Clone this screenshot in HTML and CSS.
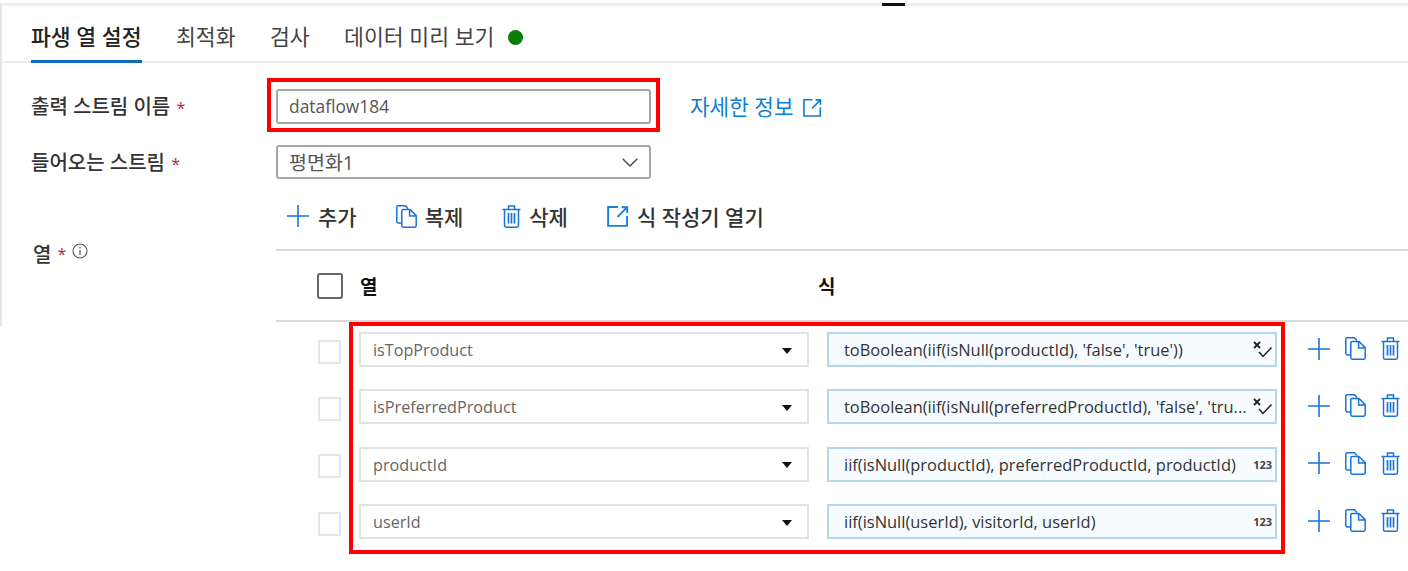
FILE: index.html
```html
<!DOCTYPE html>
<html lang="ko">
<head>
<meta charset="utf-8">
<title>파생 열 설정</title>
<link rel="stylesheet" href="styles.css">
</head>
<body>
<svg class="defs" width="0" height="0" aria-hidden="true">
  <symbol id="plus" viewBox="0 0 22 22"><path d="M11 0v22M0 11h22" fill="none" stroke="currentColor" stroke-width="1.6"/></symbol>
  <symbol id="copy" viewBox="0 0 21 23"><path d="M5.5 18H2.2Q.8 18 .8 16.6V2.2Q.8.8 2.2.8H9.5L12 3.5M5.8 5.8Q5.8 4.4 7.2 4.4H14L20.2 10.6V20.8Q20.2 22.2 18.8 22.2H7.2Q5.8 22.2 5.8 20.8ZM13.6 4.6V11H20" fill="none" stroke="currentColor" stroke-width="1.5"/></symbol>
  <symbol id="trash" viewBox="0 0 19 23"><path d="M.5 4.5H18.5M6.5 4.5V1H12.5V4.5M2.5 4.5V20.6Q2.5 22.2 4.1 22.2H14.9Q16.5 22.2 16.5 20.6V4.5" fill="none" stroke="currentColor" stroke-width="1.5"/><path d="M6.5 8V18.5M9.5 8V18.5M12.5 8V18.5" fill="none" stroke="currentColor" stroke-width="1.7"/></symbol>
  <symbol id="open" viewBox="0 0 20 20"><path d="M10 1.8H1V19H18.2V10M13.2 2H18.4V7.2M18.2 2.2 9.5 10.9" fill="none" stroke="currentColor" stroke-width="1.7"/></symbol>
  <symbol id="chev" viewBox="0 0 16 9"><path d="M.7.7 8 8 15.3.7" fill="none" stroke="currentColor" stroke-width="1.3"/></symbol>
  <symbol id="clear" viewBox="0 0 20 17"><path d="M1 1 7 7M7 1 1 7" fill="none" stroke="#222" stroke-width="1.8"/><path d="M6 11 10 15.5 18.5 6.5" fill="none" stroke="#222" stroke-width="1.5"/></symbol>
</svg>

<div class="topbar"><span class="grip"></span></div>
<main class="panel">
  <nav class="tabs">
    <a class="tab active">파생 열 설정</a>
    <a class="tab">최적화</a>
    <a class="tab">검사</a>
    <a class="tab">데이터 미리 보기<span class="dot"></span></a>
  </nav>

  <div class="form">
    <div class="field name-field">
      <label class="label name-label">출력 스트림 이름 <i class="req">*</i></label>
      <div class="control highlight-target">
        <div class="input">dataflow184</div>
        <span class="callout callout-name"></span>
      </div>
      <a class="more">자세한 정보 <svg class="more-icon"><use href="#open"/></svg></a>
    </div>
    <div class="field stream-field">
      <label class="label stream-label">들어오는 스트림 <i class="req">*</i></label>
      <div class="control">
        <div class="input select"><span class="select-text">평면화1</span><svg class="chev"><use href="#chev"/></svg></div>
      </div>
    </div>

    <div class="columns">
      <div class="label columns-label">열 <i class="req">*</i>
        <svg class="info" viewBox="0 0 16 16"><circle cx="8" cy="8" r="7" fill="none" stroke="#555" stroke-width="1.1"/><path d="M8 4v1.5M8 7v5" stroke="#555" stroke-width="1.2"/></svg>
      </div>
      <div class="editor">
        <div class="toolbar">
          <button class="tool"><svg class="i-plus"><use href="#plus"/></svg>추가</button>
          <button class="tool"><svg class="i-copy"><use href="#copy"/></svg>복제</button>
          <button class="tool"><svg class="i-trash"><use href="#trash"/></svg>삭제</button>
          <button class="tool"><svg class="i-open"><use href="#open"/></svg>식 작성기 열기</button>
        </div>
        <div class="head">
          <span class="box head-box"></span>
          <span class="head-col">열</span>
          <span class="head-expr">식</span>
        </div>
        <div class="rows">
          <span class="callout callout-rows"></span>
          <div class="row">
            <span class="box row-box"></span>
            <div class="col-select">isTopProduct<span class="caret"></span></div>
            <div class="expr"><span class="expr-text">toBoolean(iif(isNull(productId), 'false', 'true'))</span><svg class="clear"><use href="#clear"/></svg></div>
            <div class="actions"><svg class="i-plus"><use href="#plus"/></svg><svg class="i-copy"><use href="#copy"/></svg><svg class="i-trash"><use href="#trash"/></svg></div>
          </div>
          <div class="row">
            <span class="box row-box"></span>
            <div class="col-select">isPreferredProduct<span class="caret"></span></div>
            <div class="expr"><span class="expr-text">toBoolean(iif(isNull(preferredProductId), 'false', 'tru...</span><svg class="clear"><use href="#clear"/></svg></div>
            <div class="actions"><svg class="i-plus"><use href="#plus"/></svg><svg class="i-copy"><use href="#copy"/></svg><svg class="i-trash"><use href="#trash"/></svg></div>
          </div>
          <div class="row">
            <span class="box row-box"></span>
            <div class="col-select">productId<span class="caret"></span></div>
            <div class="expr"><span class="expr-text">iif(isNull(productId), preferredProductId, productId)</span><b class="type">123</b></div>
            <div class="actions"><svg class="i-plus"><use href="#plus"/></svg><svg class="i-copy"><use href="#copy"/></svg><svg class="i-trash"><use href="#trash"/></svg></div>
          </div>
          <div class="row">
            <span class="box row-box"></span>
            <div class="col-select">userId<span class="caret"></span></div>
            <div class="expr"><span class="expr-text">iif(isNull(userId), visitorId, userId)</span><b class="type">123</b></div>
            <div class="actions"><svg class="i-plus"><use href="#plus"/></svg><svg class="i-copy"><use href="#copy"/></svg><svg class="i-trash"><use href="#trash"/></svg></div>
          </div>
        </div>
      </div>
    </div>
  </div>
</main>
</body>
</html>
```
FILE: styles.css
```css
* { box-sizing: border-box; }
html, body { margin: 0; padding: 0; height: 571px; overflow: hidden; background: #fff; }
body { font-family: "Open Sans", "Noto Sans CJK KR", sans-serif; color: #333; position: relative; }
.defs { position: absolute; }
svg { display: block; flex: none; }

.topbar { height: 3px; margin-top: 3px; background: #eeeeee; position: relative; }
.grip { position: absolute; left: 882px; top: 0; width: 23px; height: 3px; background: #111; }

.panel { position: relative; height: 565px; }
.panel::before { content: ""; position: absolute; left: 0; top: -3px; width: 2px; height: 323px; background: #e6e6e6; }

.tabs { display: flex; gap: 34.4px; height: 57px; padding: 17px 0 0 31px; border-bottom: 2px solid #e9e9e9; font-size: 21.6px; line-height: 28px; color: #444; }
.tab { display: flex; align-items: flex-start; height: 40px; position: relative; white-space: nowrap; }
.tab.active { font-weight: 500; color: #222; border-bottom: 3px solid #0f6cbd; }
.dot { width: 15px; height: 15px; border-radius: 50%; background: #0a7d0a; margin: 7px 0 0 14px; }

.form { position: relative; }
.field { display: flex; align-items: center; }
.label { width: 276px; padding-left: 31px; font-size: 20px; font-weight: 500; color: #333; flex: none; white-space: nowrap; }
.name-label { margin-bottom: 2px; }
.stream-label { margin-bottom: 2px; }
.req { color: #b5254a; font-style: normal; font-size: 16px; margin-left: 1px; }
.control { position: relative; width: 375px; flex: none; }
.name-field { padding-top: 26px; }
.stream-field { padding-top: 21px; }
.input { height: 35px; padding-left: 11px; border: 2px solid #a6a6a6; border-radius: 3px; font-size: 17.4px; line-height: 33px; color: #555; background: #fff; position: relative; display: flex; align-items: center; justify-content: space-between; }
.select { height: 34px; padding-right: 11px; }
.select-text { font-size: 19.5px; }
.chev { width: 16px; height: 9px; color: #444; }
.more { margin: 0 0 3px 39px; display: flex; align-items: center; gap: 9px; color: #0f7fd6; font-size: 21.3px; white-space: nowrap; }
.more-icon { width: 19px; height: 19px; margin-top: 4px; }
.callout { position: absolute; border: 4px solid #f00; pointer-events: none; z-index: 2; }
.callout-name { left: -9px; top: -11px; width: 393px; height: 54px; }
.callout-rows { left: 73px; top: 0; width: 936px; height: 232px; }

.columns { display: flex; }
.columns-label { display: flex; align-items: flex-start; gap: 5px; padding: 60px 0 0 33px; height: 90px; }
.columns-label .req { margin-top: 4px; }
.info { width: 16px; height: 16px; margin-top: 4px; margin-left: 1px; }
.editor { flex: 1; }
.toolbar { display: flex; align-items: center; height: 72px; border-bottom: 2px solid #d9d9d9; padding: 4px 0 0 11px; gap: 39px; }
.tool { display: flex; align-items: center; gap: 8px; padding: 0; border: 0; background: none; font: 500 21px "Open Sans", "Noto Sans CJK KR", sans-serif; color: #333; white-space: nowrap; }
.tool .i-plus { margin-right: 1px; }
.i-plus { width: 22px; height: 22px; color: #1a73d8; }
.i-copy { width: 21px; height: 23px; color: #1a73d8; }
.i-trash { width: 19px; height: 23px; color: #1a73d8; }
.i-open { width: 22px; height: 22px; color: #1a7fdc; }

.head { display: flex; align-items: center; height: 71px; border-bottom: 2px solid #d9d9d9; padding: 0 0 0 41px; font-weight: 700; font-size: 19px; color: #111; }
.box { display: block; flex: none; }
.head-box { width: 26px; height: 26px; border: 2px solid #666; border-radius: 3px; }
.head-col { margin-left: 17px; width: 458px; }
.rows { position: relative; height: 240px; padding-top: 10px; }
.row { display: flex; align-items: center; height: 35px; padding-left: 42px; margin-bottom: 22.4px; }
.row-box { width: 23px; height: 24px; border: 2px solid #e6e6e6; margin-top: 4px; }
.col-select { width: 450px; height: 35px; margin-left: 18px; border: 2px solid #e2e2e2; padding: 2px 14px 0 12px; font-size: 16.2px; line-height: 31px; color: #666; display: flex; justify-content: space-between; align-items: center; }
.caret { width: 0; height: 0; border: 5.5px solid transparent; border-top: 6px solid #111; border-bottom: 0; margin-right: 1px; }
.expr { width: 450px; height: 35px; margin-left: 18px; border: 2px solid #b7d6ec; background: #f6fbff; padding: 0 3px 0 15px; font-size: 16.45px; color: #333; display: flex; justify-content: space-between; align-items: center; }
.expr-text { white-space: nowrap; }
.clear { width: 20px; height: 17px; margin-right: -1px; }
.type { font-size: 11px; font-weight: 700; color: #444; }
.actions { display: flex; align-items: center; margin: 0 0 2px 31px; gap: 15px; }
```
